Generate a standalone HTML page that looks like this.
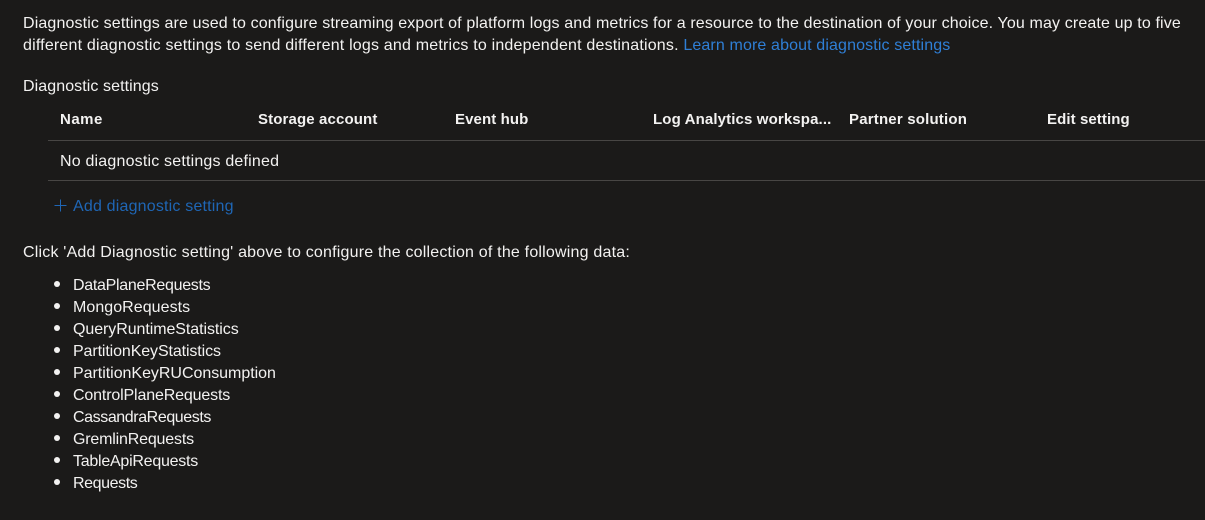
<!DOCTYPE html>
<html><head><meta charset="utf-8">
<style>
html,body{margin:0;padding:0;background:#1b1a19;width:1205px;height:520px;overflow:hidden}
body{font-family:"Liberation Sans",sans-serif;font-size:16px;color:#f3f2f1;position:relative}
.t{position:absolute;white-space:nowrap;line-height:22px;height:22px}
.b{font-weight:bold;color:#f3f2f1;font-size:15px}
.l{color:#2f7fd6;letter-spacing:.13px}
.a{color:#1f66b5}
.h{position:absolute;left:48px;right:0;height:1px;background:#484644}
.d{position:absolute;left:54px;width:6px;height:6px;border-radius:50%;background:#f3f2f1}
</style></head><body>
<div class="t" style="left:23px;top:13px;letter-spacing:.136px">Diagnostic settings are used to configure streaming export of platform logs and metrics for a resource to the destination of your choice. You may create up to five</div>
<div class="t" style="left:23px;top:35px;letter-spacing:.19px">different diagnostic settings to send different logs and metrics to independent destinations. <span class="l">Learn more about diagnostic settings</span></div>
<div class="t" style="left:23px;top:76px;letter-spacing:.08px">Diagnostic settings</div>
<div class="t b" style="left:60px;top:109px;letter-spacing:.5px">Name</div>
<div class="t b" style="left:258px;top:109px;letter-spacing:.13px">Storage account</div>
<div class="t b" style="left:455px;top:109px;letter-spacing:.1px">Event hub</div>
<div class="t b" style="left:653px;top:109px;letter-spacing:.13px">Log Analytics workspa...</div>
<div class="t b" style="left:849px;top:109px;letter-spacing:.19px">Partner solution</div>
<div class="t b" style="left:1047px;top:109px;letter-spacing:.09px">Edit setting</div>
<div class="h" style="top:140px"></div>
<div class="t" style="left:60px;top:151px;letter-spacing:.19px">No diagnostic settings defined</div>
<div class="h" style="top:180px"></div>
<svg style="position:absolute;left:54px;top:199px" width="13" height="13" viewBox="0 0 13 13"><path d="M6.5 0.5V12.5M0.5 6.5H12.5" stroke="#1f66b5" stroke-width="1" fill="none"/></svg>
<div class="t a" style="left:73px;top:196px;letter-spacing:.19px">Add diagnostic setting</div>
<div class="t" style="left:23px;top:242px;letter-spacing:.2px">Click 'Add Diagnostic setting' above to configure the collection of the following data:</div>
<div class="d" style="top:281px"></div><div class="t" style="left:73px;top:275px;letter-spacing:-.29px">DataPlaneRequests</div>
<div class="d" style="top:303px"></div><div class="t" style="left:73px;top:297px;letter-spacing:.05px">MongoRequests</div>
<div class="d" style="top:325px"></div><div class="t" style="left:73px;top:319px;letter-spacing:-.07px">QueryRuntimeStatistics</div>
<div class="d" style="top:347px"></div><div class="t" style="left:73px;top:341px;letter-spacing:-.11px">PartitionKeyStatistics</div>
<div class="d" style="top:369px"></div><div class="t" style="left:73px;top:363px;letter-spacing:-.03px">PartitionKeyRUConsumption</div>
<div class="d" style="top:391px"></div><div class="t" style="left:73px;top:385px;letter-spacing:-.15px">ControlPlaneRequests</div>
<div class="d" style="top:413px"></div><div class="t" style="left:73px;top:407px;letter-spacing:-.41px">CassandraRequests</div>
<div class="d" style="top:435px"></div><div class="t" style="left:73px;top:429px;letter-spacing:-.18px">GremlinRequests</div>
<div class="d" style="top:457px"></div><div class="t" style="left:73px;top:451px;letter-spacing:-.25px">TableApiRequests</div>
<div class="d" style="top:479px"></div><div class="t" style="left:73px;top:473px;letter-spacing:-.4px">Requests</div>
</body></html>
